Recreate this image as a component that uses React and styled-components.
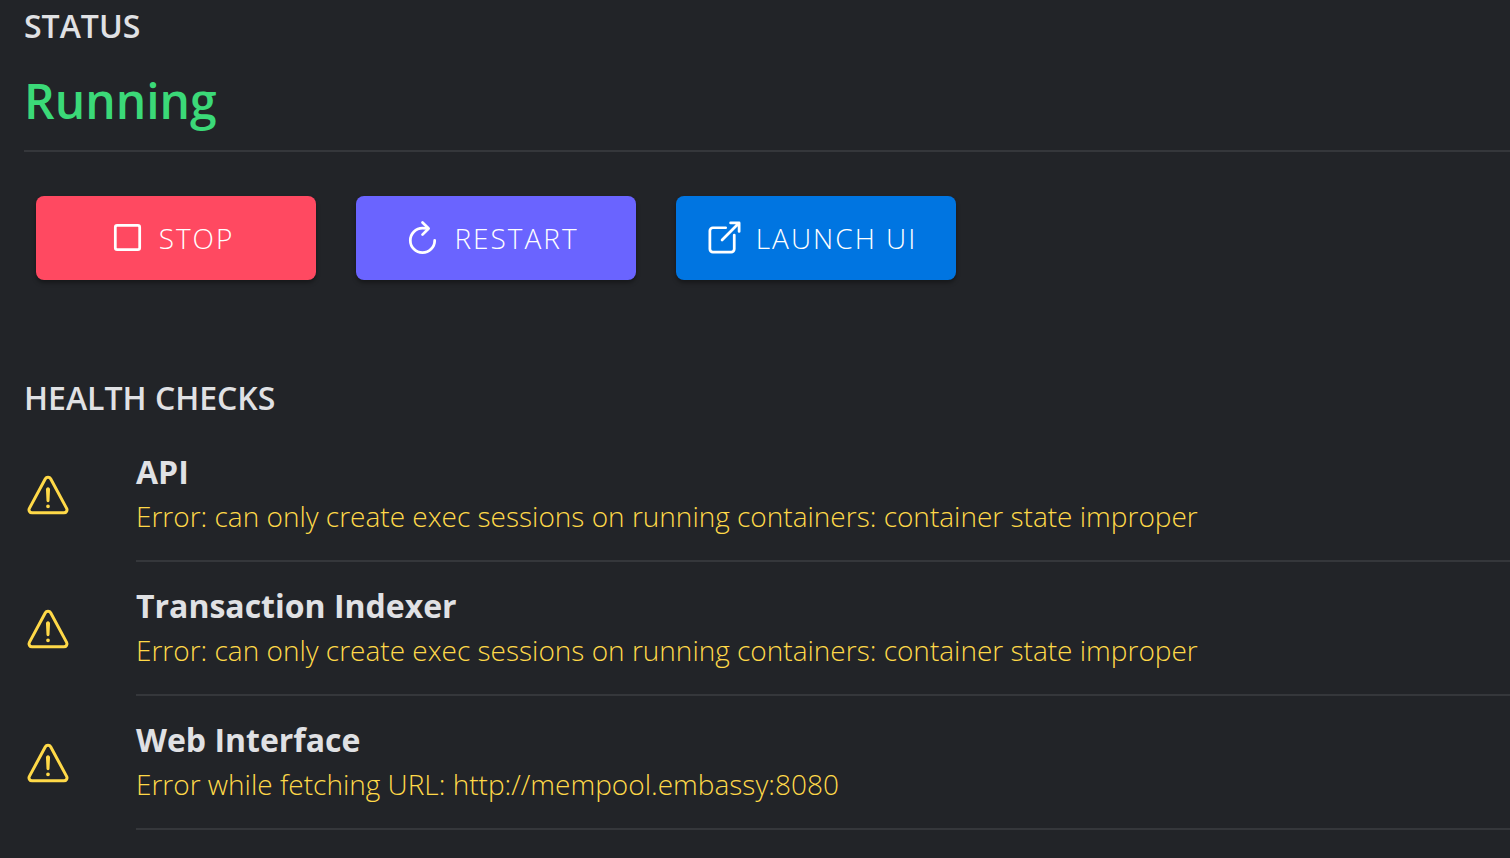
import React from "react";
import styled, { createGlobalStyle } from "styled-components";
import {
  IoOpenOutline,
  IoRefreshOutline,
  IoStopOutline,
  IoWarningOutline,
} from "react-icons/io5";

const GlobalStyle = createGlobalStyle`
  * {
    box-sizing: border-box;
  }

  body {
    margin: 0;
    background: #222428;
    color: #e0e1e4;
    font-family: "Open Sans", "Noto Sans", sans-serif;
  }
`;

const Page = styled.main`
  padding-left: 24px;
`;

const SectionTitle = styled.h2`
  margin: 0;
  font-size: 32px;
  font-weight: 600;
  line-height: 52px;
`;

const Status = styled.p`
  margin: 0;
  height: 100px;
  padding-top: 16px;
  border-bottom: 2px solid #35373b;
  color: #3bd978;
  font-size: 48px;
  font-weight: 600;
  line-height: 66px;
`;

const Actions = styled.div`
  display: flex;
  flex-wrap: wrap;
  gap: 40px;
  padding: 44px 12px 92px;
`;

const ActionButton = styled.button`
  display: flex;
  align-items: center;
  justify-content: center;
  gap: 12px;
  width: 280px;
  height: 84px;
  padding: 0 10px 0 0;
  border: none;
  border-radius: 8px;
  background: ${(props) => props.$color};
  box-shadow: 0 3px 4px rgba(0, 0, 0, 0.35);
  color: #fff;
  font-family: inherit;
  font-size: 28px;
  font-weight: 300;
  letter-spacing: 2px;
  text-transform: uppercase;
  cursor: pointer;

  svg {
    width: 39px;
    height: 39px;
    margin-bottom: 2px;
    flex-shrink: 0;
  }

  svg * {
    stroke-width: 36px;
  }
`;

const CheckList = styled.ul`
  margin: 0;
  padding: 4px 0 0;
  list-style: none;
`;

const CheckItem = styled.li`
  display: flex;
  align-items: center;
  gap: 64px;

  svg {
    width: 48px;
    height: 48px;
    flex-shrink: 0;
    color: #ffd948;
  }
`;

const CheckBody = styled.div`
  flex: 1;
  height: 134px;
  padding-top: 22px;
  border-bottom: 2px solid #35373b;
`;

const CheckName = styled.h3`
  margin: 0;
  font-size: 32px;
  font-weight: 700;
  line-height: 44px;
`;

const CheckMessage = styled.p`
  margin: 0;
  color: #ffd948;
  font-size: 28px;
  font-weight: 300;
  line-height: 44px;
`;

const actions = [
  { label: "Stop", color: "#ff4961", Icon: IoStopOutline },
  { label: "Restart", color: "#6a64ff", Icon: IoRefreshOutline },
  { label: "Launch UI", color: "#0075e1", Icon: IoOpenOutline },
];

const checks = [
  {
    name: "API",
    message:
      "Error: can only create exec sessions on running containers: container state improper",
  },
  {
    name: "Transaction Indexer",
    message:
      "Error: can only create exec sessions on running containers: container state improper",
  },
  {
    name: "Web Interface",
    message: "Error while fetching URL: http://mempool.embassy:8080",
  },
];

const App = () => {
  return (
    <>
      <GlobalStyle />
      <Page>
        <SectionTitle>STATUS</SectionTitle>
        <Status>Running</Status>
        <Actions>
          {actions.map(({ label, color, Icon }) => (
            <ActionButton key={label} type="button" $color={color}>
              <Icon />
              {label}
            </ActionButton>
          ))}
        </Actions>
        <SectionTitle>HEALTH CHECKS</SectionTitle>
        <CheckList>
          {checks.map((check) => (
            <CheckItem key={check.name}>
              <IoWarningOutline />
              <CheckBody>
                <CheckName>{check.name}</CheckName>
                <CheckMessage>{check.message}</CheckMessage>
              </CheckBody>
            </CheckItem>
          ))}
        </CheckList>
      </Page>
    </>
  );
};

export default App;
